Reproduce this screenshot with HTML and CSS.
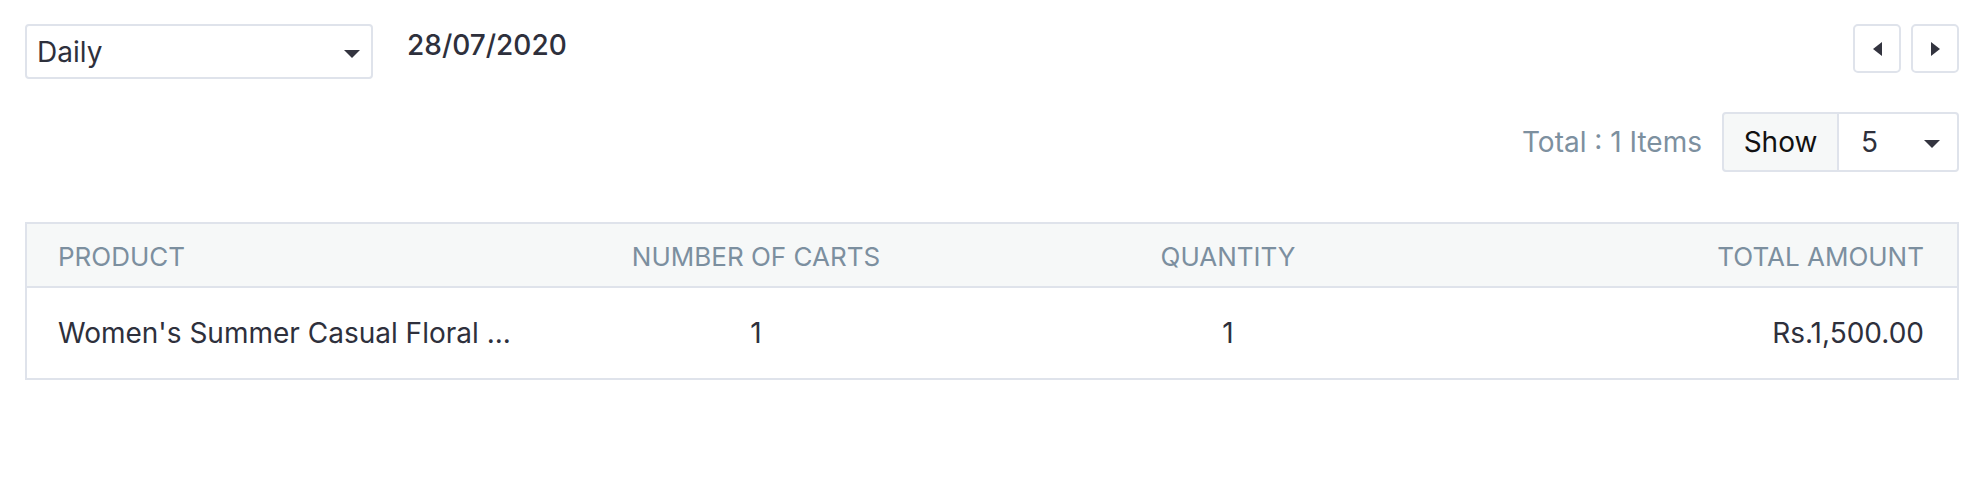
FILE: index.html
```html
<!DOCTYPE html>
<html lang="en">
<head>
<meta charset="utf-8">
<title>Abandoned carts</title>
<link rel="stylesheet" href="styles.css">
</head>
<body>
<div class="page">
  <div class="toolbar">
    <div class="select select-period">
      <span class="select-value">Daily</span>
      <svg class="caret" width="16" height="8" viewBox="0 0 16 8"><polygon points="0,0 16,0 8,8" fill="#33343f"/></svg>
    </div>
    <div class="date">28/07/2020</div>
    <div class="nav">
      <button class="nav-btn" type="button" aria-label="Previous">
        <svg width="9" height="14" viewBox="0 0 9 14"><polygon points="9,0 9,14 0,7" fill="#33343f"/></svg>
      </button>
      <button class="nav-btn" type="button" aria-label="Next">
        <svg width="9" height="14" viewBox="0 0 9 14"><polygon points="0,0 0,14 9,7" fill="#33343f"/></svg>
      </button>
    </div>
  </div>

  <div class="pager">
    <span class="total">Total : 1 Items</span>
    <div class="show-group">
      <span class="show-label">Show</span>
      <div class="show-select">
        <span class="select-value">5</span>
        <svg class="caret" width="16" height="8" viewBox="0 0 16 8"><polygon points="0,0 16,0 8,8" fill="#33343f"/></svg>
      </div>
    </div>
  </div>

  <table class="report">
    <colgroup>
      <col class="c-product">
      <col class="c-carts">
      <col class="c-qty">
      <col class="c-amount">
    </colgroup>
    <thead>
      <tr>
        <th class="left">PRODUCT</th>
        <th class="center">NUMBER OF CARTS</th>
        <th class="center">QUANTITY</th>
        <th class="right">TOTAL AMOUNT</th>
      </tr>
    </thead>
    <tbody>
      <tr>
        <td class="left">Women's Summer Casual Floral ...</td>
        <td class="center">1</td>
        <td class="center">1</td>
        <td class="right">Rs.1,500.00</td>
      </tr>
    </tbody>
  </table>
</div>
</body>
</html>
```

FILE: styles.css
```css
* { box-sizing: border-box; }

html, body {
  margin: 0;
  padding: 0;
  background: #ffffff;
}

body {
  font-family: Inter, "Noto Sans", "Liberation Sans", sans-serif;
  font-size: 28px;
  color: #2e303c;
}

.page {
  padding: 24px 21px 0 25px;
}

.toolbar {
  display: flex;
  align-items: flex-start;
}

.select {
  display: flex;
  align-items: center;
  justify-content: space-between;
  border: 2px solid #dfe3eb;
  border-radius: 4px;
  background: #fff;
}

.select-period {
  width: 348px;
  height: 55px;
  padding: 0 11px 0 10px;
}

.select-value {
  line-height: 34px;
}

.caret {
  display: block;
  margin-top: 4px;
}

.date {
  margin-left: 34px;
  margin-top: 4px;
  line-height: 34px;
  font-weight: 500;
  color: #2e303c;
}

.nav {
  margin-left: auto;
  display: flex;
  gap: 10px;
}

.nav-btn {
  width: 48px;
  height: 49px;
  border: 2px solid #dfe3eb;
  border-radius: 5px;
  background: #fff;
  padding: 0;
  display: flex;
  align-items: center;
  justify-content: center;
}

.nav-btn svg {
  display: block;
}

.pager {
  margin-top: 33px;
  display: flex;
  justify-content: flex-end;
  align-items: center;
}

.total {
  color: #7d909f;
  margin-right: 20px;
  line-height: 34px;
}

.show-group {
  display: flex;
  height: 60px;
}

.show-label {
  width: 117px;
  display: flex;
  align-items: center;
  justify-content: center;
  background: #f6f8f8;
  border: 2px solid #dfe3eb;
  border-radius: 4px 0 0 4px;
  color: #111111;
}

.show-select {
  width: 120px;
  display: flex;
  align-items: center;
  justify-content: space-between;
  border: 2px solid #dfe3eb;
  border-left: none;
  border-radius: 0 4px 4px 0;
  padding: 0 17px 0 22px;
}

.report {
  margin-top: 50px;
  width: 100%;
  border-collapse: collapse;
  table-layout: fixed;
  border: 2px solid #dfe3eb;
}

.c-product { width: 487px; }
.c-carts { width: 488px; }
.c-qty { width: 456px; }

.report th {
  height: 64px;
  background: #f6f8f8;
  color: #7c8f9f;
  font-size: 26px;
  font-weight: 400;
  padding: 2px 33px 0 31px;
  border-bottom: 2px solid #dfe3eb;
}

.report td {
  height: 92px;
  padding: 0 33px 0 31px;
  color: #2e303c;
  white-space: nowrap;
}

.left { text-align: left; }
.center { text-align: center; }
.right { text-align: right; }
```
